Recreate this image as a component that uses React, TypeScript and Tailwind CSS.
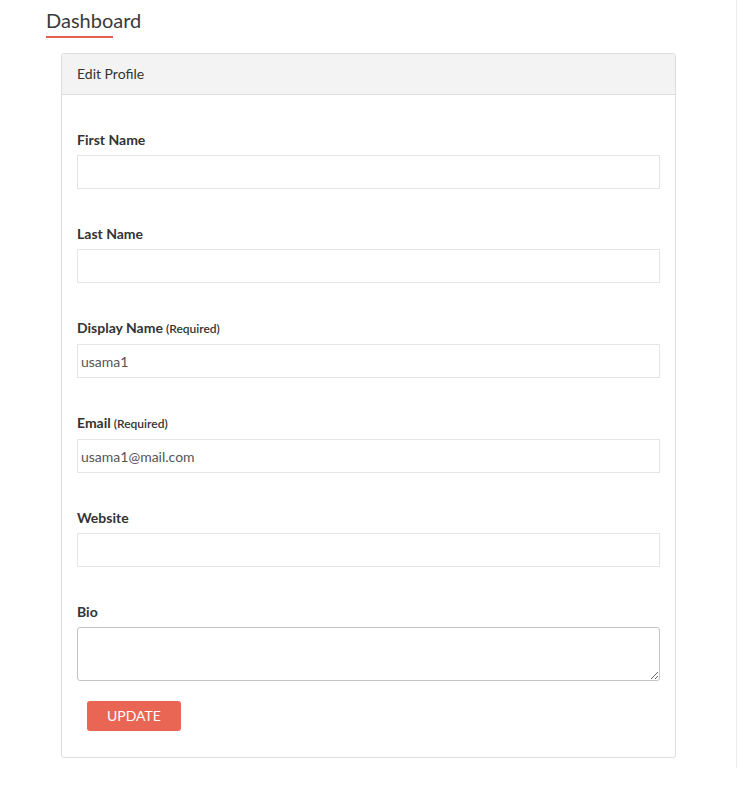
import React from "react";

const fields = [
  { label: "First Name", value: "" },
  { label: "Last Name", value: "" },
  { label: "Display Name", required: true, value: "usama1" },
  { label: "Email", required: true, value: "usama1@mail.com" },
  { label: "Website", value: "" },
];

export default function App() {
  return (
    <div
      className="relative min-h-[796px] w-[739px] bg-white text-[#333]"
      style={{ fontFamily: "Lato, 'Open Sans', sans-serif" }}
    >
      {/* right edge line */}
      <div className="absolute left-[736px] top-0 h-[768px] w-px bg-[#ececec]" />

      <div className="pl-[46px] pt-[7px]">
        <h1 className="text-[20px] leading-[26px] font-normal text-[#3a3a3a]">Dashboard</h1>
        <div className="mt-[3px] h-[2px] w-[67px] bg-[#e8604c]" />
      </div>

      <div className="ml-[61px] mt-[15px] w-[615px] rounded-[3px] border border-[#dddddd]">
        <div className="h-[41px] rounded-t-[3px] border-b border-[#dddddd] bg-[#f3f3f3] px-[15px] text-[14px] leading-[40px]">
          Edit Profile
        </div>
        <div className="px-[15px] pt-[35px] pb-[26px]">
          {fields.map((f) => (
            <div key={f.label} className="mb-[35px]">
              <label className="block text-[14px] font-bold leading-[20px] text-[#333]">
                {f.label}
                {f.required && (
                  <span className="text-[12px] font-semibold"> (Required)</span>
                )}
              </label>
              <input
                readOnly
                value={f.value}
                className="mt-[5px] block h-[34px] w-[583px] border border-[#e5e5e5] px-[3px] text-[14px] text-[#555] outline-none"
                style={{ fontFamily: "Lato, sans-serif" }}
              />
            </div>
          ))}
          <div>
            <label className="block text-[14px] font-bold leading-[20px] text-[#333]">Bio</label>
            <textarea
              readOnly
              className="mt-[5px] block h-[54px] w-[583px] rounded-[3px] border border-[#c4c4c4] px-[4px] text-[14px] outline-none"
            />
          </div>
          <button className="ml-[10px] mt-[20px] h-[30px] w-[94px] rounded-[3px] bg-[#ea6654] pb-[1px] text-[14px] text-white">
            UPDATE
          </button>
        </div>
      </div>
    </div>
  );
}
